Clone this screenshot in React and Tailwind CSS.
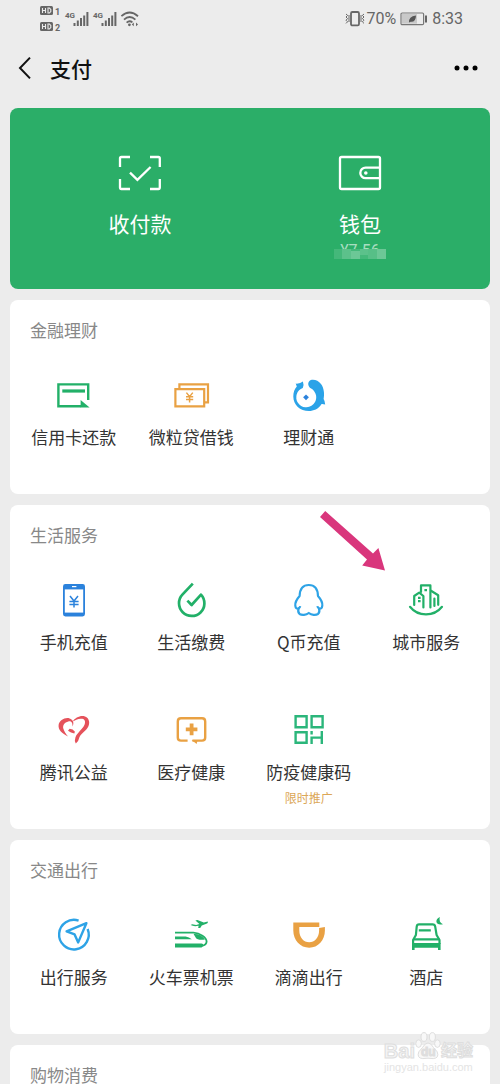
import React from 'react';

const GREEN = '#22b068';
const ORANGE = '#e9a143';
const BLUE = '#2ea3e6';

function Icon({ children, color = GREEN, width = 2 }) {
  return (
    <svg
      viewBox="0 0 40 40"
      className="h-10 w-10"
      fill="none"
      stroke={color}
      strokeWidth={width}
      aria-hidden="true"
    >
      {children}
    </svg>
  );
}

const CreditCardIcon = () => (
  <Icon width={2.4}>
    <path d="M34.2 25V9.4H4.4v21.9H27" />
    <path d="M8.3 16H31" strokeWidth="3.2" />
    <path d="M26.6 25l9 7.5h-9z" fill={GREEN} stroke="none" />
  </Icon>
);

const LoanIcon = () => (
  <Icon color={ORANGE} width={2.2}>
    <path d="M4.4 14.2h28.8v17.1H4.4z" />
    <path d="M8.4 14V9.4H37v18h-3.6" />
    <path d="M15.4 17.6l3.2 4 3.2-4M18.6 21.6v6M15 21.8h7.2M15 24.6h7.2" strokeWidth="1.5" />
  </Icon>
);

const WealthIcon = () => (
  <Icon>
    <path
      fill="#2ba3e8"
      stroke="none"
      d="M6.7 8.6Q11 9 13.9 6.6Q15.2 10 13.8 12.9A10 10 0 1 0 22.2 13.6C19.6 12.4 18.2 8.4 20.2 6.2C23 3.4 29 5 32 9C35 13 35.7 19 34.6 24Q36 26 36.2 29.6Q34 28.8 32.6 29C29.5 34 24.5 36 20 36C11 36 4.3 30 4.3 21.5C4.3 17 5.6 14 7.8 11.4z"
    />
    <path fill="#2b82dc" stroke="none" d="M17 19.4l2.9 2.9-2.9 2.9-2.9-2.9z" />
  </Icon>
);

const PhoneIcon = () => (
  <Icon color="#2b82dc">
    <rect x="9" y="4" width="22" height="32.4" rx="2.4" fill="#2b82dc" stroke="none" />
    <path d="M10.8 9.4h18.4v23.2H10.8z" fill="#fff" stroke="none" />
    <path d="M18 6.6h4.4" stroke="#fff" strokeWidth="1.2" />
    <path d="M16 16l4 5 4-5M20 21v6.6M15.4 21.4h9.2M15.4 24.4h9.2" strokeWidth="1.5" />
  </Icon>
);

const BillsIcon = () => (
  <Icon width={2.7}>
    <path d="M21.8 3.6L11.6 14.4A12.7 12.7 0 1 0 30 14.6L20.6 25l-4.2-4.4" strokeLinejoin="round" />
  </Icon>
);

const PenguinIcon = () => (
  <Icon color={BLUE} width={2.2}>
    <path
      strokeLinejoin="round"
      d="M19.8 5C13.6 5 10.8 9.6 10.6 16C7.6 19.4 6 23 6.3 25.6C6.6 28.2 7.6 29 9.6 28.6C9 30.4 9 32.6 10.6 34C12.8 35.4 17 35.2 19.8 33C22.6 35.2 26.8 35.4 29 34C30.6 32.6 30.6 30.4 30 28.6C32 29 33 28.2 33.3 25.6C33.6 23 32 19.4 29 16C28.8 9.6 26 5 19.8 5z"
    />
    <path d="M9.2 28.6q1.8-.6 2-2.4M30.4 28.6q-1.8-.6-2-2.4" />
  </Icon>
);

const CityIcon = () => (
  <Icon width={2.2}>
    <g strokeLinecap="round" strokeLinejoin="round">
      <path d="M4 26.8C12 37 28 37 36 26.8" />
      <path d="M8.2 25v-9l5-3.4 4.2 3.4v11.4" />
      <path d="M15 12V5.4h9.4v22" />
      <path d="M25 10.8l7.2 4.4v9.6M28.4 18.6V26" />
    </g>
    <path d="M12 17.8h2.6M12 21.2h2.6M18.4 10.2H21" />
  </Icon>
);

const CharityIcon = () => (
  <Icon>
    <g fill="#e5525b" stroke="none">
      <path d="M14 26.4C8 23.6 4 19.8 4.6 15C5.2 10.4 11 7 15.6 8.4C19 9.4 20.6 13 18.4 16.4C19 12.4 16.8 10.8 14.4 11.4C10.4 12.2 8.4 15.4 9.4 18.8C10 21.2 11.8 24 14 26.4z" />
      <path d="M18.6 11.6C21 7.6 26.6 5 31 6.4C35.6 8 36.4 13.4 33.6 17.8C31 21.8 26 24.4 25 28.4Q24.6 31.4 21.8 33.4Q20.2 30.4 21.4 27.4C23.2 22.8 28.8 19 30.6 14.6C32 10.6 30 8.6 26.8 8.8C23.6 9 20.8 10.4 18.6 11.6z" />
      <path d="M15.6 18.8q3.4.2 5.2 2.6l-.4 2q-3.6-.6-6.4-2.6z" />
    </g>
  </Icon>
);

const MedicalIcon = () => (
  <Icon color={ORANGE} width={2.4}>
    <path d="M16.6 30.6H10Q6.8 30.6 6.8 27.4V11.4Q6.8 8.2 10 8.2h21Q34.2 8.2 34.2 11.4v16Q34.2 30.6 31 30.6H21.4" />
    <path d="M20.6 30h6l-1 4z" fill={ORANGE} stroke="none" />
    <path d="M20.6 13.6v11.6M14.8 19.4h11.6" strokeWidth="3.8" />
  </Icon>
);

const HealthCodeIcon = () => (
  <Icon color="#2bb67b" width={2.4}>
    <path d="M6.6 6.2h11v11h-11zM22.6 6.2h11v11h-11zM6.6 22.2h11v10.6h-11z" />
    <path d="M22.6 21v3.4M22.6 34v-6.4h10.2M32.8 21v13" />
  </Icon>
);

const TravelIcon = () => (
  <Icon color={BLUE} width={2.4}>
    <path d="M24.6 5.6A14.8 14.8 0 1 0 33.6 14" />
    <path d="M32.4 8.2L12.6 16.4l8 3 3.6 8z" strokeLinejoin="round" />
  </Icon>
);

const TrainIcon = () => (
  <Icon width={1.8}>
    <path d="M4 17.6h18.4C29 18 35.6 22.4 35.6 26.6Q35.4 30 31 30.8" />
    <path d="M4 28.6h26.4Q33 28.8 31.6 31.4Q30.8 32.6 29 32.6H4z" fill={GREEN} stroke="none" />
    <path d="M4 21.4h10.6q3.6.4 6.2 2.8H4z" fill={GREEN} stroke="none" />
    <path d="M22.6 19q7.4-.6 11.4 5.6-7.4 1-9.2-1.8z" fill={GREEN} stroke="none" />
    <path d="M19.6 10l1.6-.8 4 .8 3.2-1-4-3.4 2-.6 6.4 2.4 4-1q.6 1.6-1.4 2.4l-4.6 1.6-1.6 2.6h-2l.4-2.2q-5 1-8-.8z" fill={GREEN} stroke="none" />
  </Icon>
);

const DidiIcon = () => (
  <Icon>
    <path
      fill={ORANGE}
      stroke="none"
      d="M4.3 7.4h26v4.7h-20v3.4c0 7 4.4 11.8 9.9 11.8s9.9-4.8 9.9-11.8v-2.6l5.8-.8v3.4c0 9.8-6.8 17.2-15.7 17.2S4.3 25.3 4.3 15.5z"
    />
  </Icon>
);

const HotelIcon = () => (
  <Icon width={2.2}>
    <path d="M7.1 29v-4l2.8-5 .8-8.4Q11 9.4 13 9.4h13.6Q28.8 9.4 29.2 11.6L30.6 20l2.9 5v4" strokeLinejoin="round" />
    <path d="M12.8 15.4h12M7.4 24.4h26" />
    <path d="M6 28h28.6v7H32v-2.2H8.6V35H6z" fill={GREEN} stroke="none" />
    <path d="M33.8 2q-3.6 1.6-3.4 4.8.8 3.6 6.6 2.4-4.6-2-3.2-7.2z" fill={GREEN} stroke="none" />
  </Icon>
);

const sections = [
  {
    title: '金融理财',
    items: [
      { label: '信用卡还款', icon: CreditCardIcon },
      { label: '微粒贷借钱', icon: LoanIcon },
      { label: '理财通', icon: WealthIcon },
    ],
  },
  {
    title: '生活服务',
    arrow: true,
    items: [
      { label: '手机充值', icon: PhoneIcon },
      { label: '生活缴费', icon: BillsIcon },
      { label: 'Q币充值', icon: PenguinIcon },
      { label: '城市服务', icon: CityIcon },
      { label: '腾讯公益', icon: CharityIcon },
      { label: '医疗健康', icon: MedicalIcon },
      { label: '防疫健康码', icon: HealthCodeIcon, note: '限时推广' },
    ],
  },
  {
    title: '交通出行',
    items: [
      { label: '出行服务', icon: TravelIcon },
      { label: '火车票机票', icon: TrainIcon },
      { label: '滴滴出行', icon: DidiIcon },
      { label: '酒店', icon: HotelIcon },
    ],
  },
  { title: '购物消费', items: [] },
];

function StatusBar() {
  return (
    <div className="flex h-[38px] items-center justify-between pr-[37px] pl-10 text-[#666]">
      <svg viewBox="0 0 100 30" className="h-[30px] w-[100px]" fill="none" aria-hidden="true">
        {[2, 18].map((y, i) => (
          <g key={y}>
            <rect x="0" y={y} width="13" height="9" rx="1.5" fill="#666" />
            <path
              d={`M2.5 ${y + 2}v5M5.5 ${y + 2}v5M2.5 ${y + 4.5}h3M8 ${y + 2}v5h1.4l1.4-1.4v-2.2L9.4 ${y + 2}z`}
              stroke="#ececec"
              strokeWidth="1.1"
            />
            <text x="15" y={y + 9} fill="#666" fontSize="9" fontWeight="700" fontFamily="Roboto, sans-serif">
              {i + 1}
            </text>
          </g>
        ))}
        {[25, 53].map((x) => (
          <g key={x}>
            <text x={x} y="14" fill="#666" fontSize="8" fontWeight="700" fontFamily="Roboto, sans-serif">
              4G
            </text>
            <path
              d={`M${x + 9.5} 22v-3M${x + 12.8} 22v-5.6M${x + 16} 22v-8M${x + 19.2} 22v-10.6M${x + 22.4} 22v-14`}
              stroke="#666"
              strokeWidth="2"
            />
          </g>
        ))}
        <g stroke="#666" strokeWidth="1.8">
          <path d="M81.4 12.2Q89.6 4.8 98 12.2" />
          <path d="M84 15.6Q89.6 10.4 95.4 15.6" />
          <path d="M86.6 18.6Q89.6 16 92.4 18.4" />
        </g>
        <circle cx="89.4" cy="20.8" r="1.4" fill="#666" />
        <path d="M91.8 20.4l2-1.8v3.6zM98 20.4l-2-1.8v3.6z" fill="#666" />
      </svg>

      <div className="flex items-center font-[Roboto,sans-serif] text-base">
        <svg viewBox="0 0 20 16" className="h-4 w-5" fill="none" stroke="#666" aria-hidden="true">
          <rect x="6" y="1" width="8" height="13.4" rx="1.4" strokeWidth="1.8" />
          <path
            d="M1 3l1.6 1.4L1 6l1.6 1.6L1 9.2l1.6 1.6L1 12.4M4 4v7M19 3l-1.6 1.4L19 6l-1.6 1.6L19 9.2l-1.6 1.6 1.6 1.6M16 4v7"
            strokeWidth="1"
          />
        </svg>
        <span className="ml-px">70%</span>
        <svg viewBox="0 0 28 14" className="mx-1 h-3.5 w-7" fill="none" aria-hidden="true">
          <rect x="1" y="1" width="22.6" height="11.6" rx="1.2" stroke="#777" strokeWidth="1.2" />
          <path d="M2 2h15v9.6H2z" fill="#c9c9c9" />
          <path d="M9 10.6q-.6-6.4 7-7.2-.2 7-5.4 6.4z" fill="#555" />
          <path d="M26 3.4v7" stroke="#666" strokeWidth="2" />
        </svg>
        <span>8:33</span>
      </div>
    </div>
  );
}

function Header() {
  return (
    <header className="flex h-[60px] items-center pr-[22px] pl-[18px]">
      <button type="button" aria-label="返回">
        <svg viewBox="0 0 14 24" className="h-6 w-3.5" fill="none" stroke="#111" strokeWidth="2" aria-hidden="true">
          <path d="M12 1.6L2 12l10 10.4" />
        </svg>
      </button>
      <h1 className="ml-[18px] text-[21px] leading-7 font-medium text-[#111]">支付</h1>
      <button type="button" aria-label="更多" className="ml-auto">
        <svg viewBox="0 0 24 8" className="h-2 w-6" fill="#000" aria-hidden="true">
          <circle cx="3" cy="4" r="2.5" />
          <circle cx="12" cy="4" r="2.5" />
          <circle cx="21" cy="4" r="2.5" />
        </svg>
      </button>
    </header>
  );
}

function WalletCard() {
  return (
    <section className="grid h-[181px] grid-cols-2 rounded-lg bg-[#2bae68] px-5 pt-[41px] text-white">
      <button type="button" className="flex flex-col items-center">
        <svg viewBox="0 0 48 48" className="h-12 w-12" fill="none" stroke="#fff" strokeWidth="2.3" aria-hidden="true">
          <path d="M4 18V9.4Q4 8 5.4 8H14M34 8h8.4Q43.8 8 43.8 9.4V18M43.8 30v8.6Q43.8 40 42.4 40H34M14 40H5.4Q4 40 4 38.6V30" />
          <path d="M14 23.6l7.4 7.2L34.6 18" />
        </svg>
        <span className="mt-3 text-[21px] leading-7">收付款</span>
      </button>
      <button type="button" className="flex flex-col items-center">
        <svg viewBox="0 0 48 48" className="h-12 w-12" fill="none" stroke="#fff" strokeWidth="2.3" aria-hidden="true">
          <rect x="4" y="8" width="40" height="32" rx="1.6" />
          <path d="M44 18.6H29.6a5.3 5.3 0 0 0 0 10.6H44" />
          <circle cx="29.8" cy="24" r="1.8" fill="#fff" stroke="none" />
        </svg>
        <span className="mt-3 text-[21px] leading-7">钱包</span>
        <span className="relative mt-1 w-[52px] text-center font-[Roboto,sans-serif] text-base leading-5 text-white/60">
          ¥7.56
          {/* censored balance */}
          <svg viewBox="0 0 52 10" className="absolute bottom-[2px] left-0 h-2.5 w-full" aria-hidden="true">
            <path d="M0 0h52v10H0z" fill="#44b87a" />
            <path d="M8 0h9v10H8zM26 0h8v6h-8z" fill="#5cc18b" />
            <path d="M17 2h9v8h-9zM43 0h9v10h-9z" fill="#6cc796" />
            <path d="M34 0h9v10h-9z" fill="#57bf87" />
          </svg>
        </span>
      </button>
    </section>
  );
}

function ServiceItem({ label, icon: ItemIcon, note }) {
  return (
    <button type="button" className="flex h-[119px] flex-col items-center">
      <ItemIcon />
      <span className="mt-[10px] text-[17px] leading-6 whitespace-nowrap text-[#333]">{label}</span>
      {note && <span className="mt-1 text-xs leading-5 text-[#dca757]">{note}</span>}
    </button>
  );
}

function ServiceSection({ title, items, arrow }) {
  return (
    <section className="relative rounded-lg bg-white px-[5px] pt-[21px]">
      <h2 className="px-[15px] text-[17px] leading-[18px] text-[#888]">{title}</h2>
      <div className="mt-9 grid grid-cols-4 gap-y-[11px]">
        {items.map((item) => (
          <ServiceItem key={item.label} {...item} />
        ))}
      </div>
      {arrow && (
        <svg viewBox="0 0 66 62" className="absolute top-[6px] right-[104px] h-[62px] w-[66px]" aria-hidden="true">
          <path d="M5.2 0L0 6l47 42.4-4.8 6L65 59.4 58.4 37l-5.4 5.4z" fill="#d9367c" />
        </svg>
      )}
    </section>
  );
}

function Watermark() {
  return (
    <div className="pointer-events-none absolute right-[27px] bottom-[11px] flex flex-col items-center font-[Liberation_Sans,Noto_Sans_CJK_SC,sans-serif] text-[#e4e4e4]">
      <div className="flex items-end text-xl leading-5 font-bold text-[#f4f4f4] [-webkit-text-stroke:1px_#dedede]">
        <span>Bai</span>
        <svg viewBox="0 0 26 30" className="h-[30px] w-[26px]" fill="#f8f8f8" stroke="#dedede" aria-hidden="true">
          <ellipse cx="9" cy="6" rx="3" ry="4.4" />
          <ellipse cx="17.4" cy="6" rx="3" ry="4.4" />
          <ellipse cx="3.6" cy="12.6" rx="2.8" ry="3.8" />
          <ellipse cx="22.4" cy="12.6" rx="2.8" ry="3.8" />
          <path d="M13 12q3 0 5.4 4.4l3.8 4.4q2.4 6.4-4 6.8-5.2-.8-10.4 0-6.4-.4-4-6.8l3.8-4.4Q10 12 13 12z" />
          <text x="6" y="25" fontSize="12" fontWeight="700" fill="#dedede" className="[-webkit-text-stroke:0px]">
            du
          </text>
        </svg>
        <span className="text-[16px]">经验</span>
      </div>
      <span className="text-[11px] leading-3">jingyan.baidu.com</span>
    </div>
  );
}

export default function App() {
  return (
    <div className="relative h-screen overflow-hidden bg-[#ececec] font-[Noto_Sans_CJK_SC,sans-serif]">
      <StatusBar />
      <Header />
      <main className="mt-[10px] flex flex-col gap-[11px] px-[10px]">
        <WalletCard />
        {sections.map((section) => (
          <ServiceSection key={section.title} {...section} />
        ))}
      </main>
      <Watermark />
    </div>
  );
}
